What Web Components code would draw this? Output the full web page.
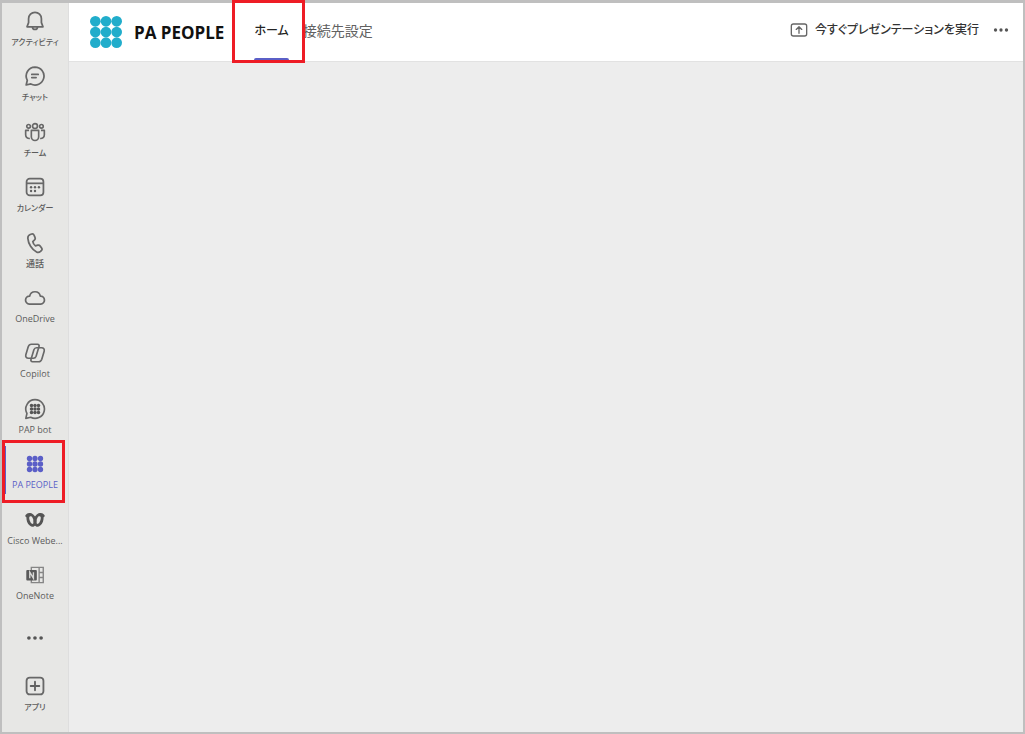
<!DOCTYPE html>
<html lang="ja">
<head>
<meta charset="utf-8">
<meta name="viewport" content="width=device-width, initial-scale=1">
<title>PA PEOPLE</title>
<style>
  body { margin: 0; font-family: "Open Sans", "Noto Sans CJK JP", sans-serif; color: #242424; }
</style>
</head>
<body>
<app-shell></app-shell>
<script>
const ICONS = {
  bell: '<g fill="none" stroke="#686868" stroke-width="1.9" stroke-linejoin="round"><path d="M12 2.500a7 7 0 0 0-7 7v4.300L3.300 18.300h17.400L19 13.800V9.500A7 7 0 0 0 12 2.500z"/><path d="M9.300 18.500a2.700 2.700 0 0 0 5.400 0"/></g>',
  chat: '<g fill="none" stroke="#686868" stroke-width="1.9" stroke-linecap="round" stroke-linejoin="round"><path d="M12 2.200a9.800 9.800 0 1 1-4.500 18.500L2.400 21.800l1.200-5.100A9.800 9.800 0 0 1 12 2.200z"/><path d="M8.500 10.300h7M8.500 13.700h4.700"/></g>',
  team: '<g fill="none" stroke="#686868" stroke-width="1.8"><circle cx="12" cy="5.500" r="2.700"/><circle cx="5" cy="5.800" r="2"/><circle cx="19" cy="5.800" r="2"/><path d="M8 10.300h8v7a4 4 0 0 1-8 0z" stroke-linejoin="round"/><path d="M5.500 10.300H1.800v4.700c0 2.800 2 4.300 4.600 4.100M18.500 10.300h3.700v4.700c0 2.800-2 4.300-4.600 4.100" stroke-linejoin="round"/></g>',
  calendar: '<rect x="2.800" y="2.800" width="18.400" height="18.400" rx="3.500" fill="none" stroke="#686868" stroke-width="1.900"/><path d="M3 8h18" stroke="#686868" stroke-width="1.900"/><g fill="#616161"><circle cx="7.700" cy="12.200" r="1.300"/><circle cx="12" cy="12.200" r="1.300"/><circle cx="16.300" cy="12.200" r="1.300"/><circle cx="7.700" cy="16.400" r="1.300"/><circle cx="12" cy="16.400" r="1.300"/></g>',
  phone: '<path d="M6.800 2.700l1.600-.5c1.100-.3 2.200.3 2.600 1.300l1 2.400c.4.900.2 2-.5 2.700L9.600 10.400c.3 1.700 1.500 3.600 2.900 4.700l2.500-.7c1-.3 2 0 2.600.8l1.600 2.200c.6.900.5 2.200-.3 2.900l-.9.900c-1.200 1.100-2.900 1.400-4.300.6C8.500 19.100 4.700 12.900 4.200 6.900c-.1-1.900.8-3.500 2.600-4.200z" fill="none" stroke="#686868" stroke-width="1.900" stroke-linejoin="round"/>',
  cloud: '<path d="M5.800 18.600a4.300 4.300 0 1 1 .4-8.600A5.900 5.900 0 0 1 17.800 10a4.300 4.300 0 1 1 .4 8.600z" fill="none" stroke="#686868" stroke-width="1.900" stroke-linejoin="round"/>',
  copilot: '<g fill="none" stroke="#686868" stroke-width="1.800" stroke-linejoin="round"><path d="M8 2.500h6.800c1.300 0 2 1.100 1.600 2.400l-3.200 10.600c-.5 1.400-1.400 2.200-2.900 2.200H4.800c-2.200 0-3.400-1.600-2.800-3.700l2.600-8.700C5.200 3.500 6.200 2.500 8 2.500z"/><path d="M16 21.500H9.200c-1.300 0-2-1.100-1.600-2.400l3.200-10.600c.5-1.400 1.400-2.200 2.900-2.200h5.500c2.200 0 3.400 1.600 2.800 3.700l-2.600 8.700c-.6 1.800-1.600 2.800-3.400 2.800z"/></g>',
  bot: '<path d="M12 1.800a10.200 10.200 0 1 1-4.700 19.200L2 22.200l1.200-5.300A10.200 10.200 0 0 1 12 1.800z" fill="none" stroke="#686868" stroke-width="1.800" stroke-linejoin="round"/><g fill="#555"><circle cx="8.200" cy="8.200" r="1.900"/><circle cx="12" cy="8.200" r="1.900"/><circle cx="15.800" cy="8.200" r="1.900"/><circle cx="8.200" cy="12" r="1.900"/><circle cx="12" cy="12" r="1.900"/><circle cx="15.800" cy="12" r="1.900"/><circle cx="8.200" cy="15.800" r="1.900"/><circle cx="12" cy="15.800" r="1.900"/><circle cx="15.800" cy="15.800" r="1.900"/></g>',
  people: '<g fill="#5b5fc7"><circle cx="6" cy="6" r="2.900"/><circle cx="12" cy="6" r="2.900"/><circle cx="18" cy="6" r="2.900"/><circle cx="6" cy="12" r="2.900"/><circle cx="12" cy="12" r="2.900"/><circle cx="18" cy="12" r="2.900"/><circle cx="6" cy="18" r="2.900"/><circle cx="12" cy="18" r="2.900"/><circle cx="18" cy="18" r="2.900"/></g>',
  webex: '<g fill="none" stroke="#555" stroke-width="3.200" stroke-linecap="round"><ellipse cx="8.200" cy="12" rx="3.600" ry="6" transform="rotate(-20 8.200 12)"/><ellipse cx="15.800" cy="12" rx="3.600" ry="6" transform="rotate(20 15.800 12)"/><path d="M3 7.500c1-1.400 2.500-1.800 4-1.300M21 7.500c-1-1.400-2.500-1.800-4-1.300"/></g>',
  onenote: '<path d="M8 7V3.700h13v16.600H8V17M16.500 4v16M16.500 9.300H21M16.500 14.700H21" fill="none" stroke="#858585" stroke-width="1.500"/><rect x="2.500" y="6.500" width="11.500" height="11.500" rx="1" fill="#5a5a5a"/><path d="M6.300 15.500V9l4 6.500V9" fill="none" stroke="#d8d8d6" stroke-width="1.500"/>',
  more: '<g fill="#555"><circle cx="4.700" cy="12" r="2.200"/><circle cx="12" cy="12" r="2.200"/><circle cx="19.300" cy="12" r="2.200"/></g>',
  plus: '<rect x="2.800" y="2.800" width="18.400" height="18.400" rx="3.500" fill="none" stroke="#686868" stroke-width="2"/><path d="M12 7.300v9.400M7.300 12h9.400" stroke="#616161" stroke-width="2" stroke-linecap="round"/>',
  present: '<rect x="2.800" y="4.800" width="18.400" height="14.400" rx="2.500" fill="none" stroke="#666" stroke-width="1.600"/><path d="M12 16V8.500M8.700 11.300L12 8l3.300 3.300" fill="none" stroke="#666" stroke-width="1.600" stroke-linecap="round" stroke-linejoin="round"/>',
  logo: '<g fill="#21adcb"><circle cx="4" cy="4" r="4"/><circle cx="12" cy="4" r="4"/><circle cx="20" cy="4" r="4"/><circle cx="4" cy="12" r="4"/><circle cx="12" cy="12" r="4"/><circle cx="20" cy="12" r="4"/><circle cx="4" cy="20" r="4"/><circle cx="12" cy="20" r="4"/><circle cx="20" cy="20" r="4"/></g>'
};

class Base extends HTMLElement {
  connectedCallback() {
    if (this.shadowRoot) return;
    this.attachShadow({ mode: 'open' }).innerHTML = this.view();
  }
}

customElements.define('app-icon', class extends Base {
  view() {
    return `<style>:host{display:block;flex:none;width:var(--icon-size,22px);height:var(--icon-size,22px)}svg{display:block;width:100%;height:100%}</style>
    <svg viewBox="0 0 24 24" aria-hidden="true">${ICONS[this.getAttribute('name')]}</svg>`;
  }
});

customElements.define('call-out', class extends Base {
  view() {
    return `<style>:host{position:absolute;box-sizing:border-box;border:3px solid #ee1c25;pointer-events:none;z-index:2}</style>`;
  }
});

customElements.define('rail-item', class extends Base {
  view() {
    return `<style>
      :host{display:block;position:relative;height:40px;color:#5c5c5c}
      :host([selected]){color:#5b5fc7}
      button{all:unset;box-sizing:border-box;display:flex;flex-direction:column;align-items:center;width:100%;height:100%;padding-top:1px;gap:3px;cursor:pointer}
      :host([compact]) button{justify-content:center;padding:0;gap:0}
      :host([compact]) app-icon{--icon-size:20px}
      span{font-size:9px;line-height:14px;font-weight:500;white-space:nowrap}
      :host([kana]) span{font-size:8px;font-feature-settings:"palt"}
      :host([selected])::before{content:"";position:absolute;left:2px;top:-6px;width:2px;height:48px;background:#5b5fc7}
      call-out{left:0;right:3px;top:-12px;height:63px}
    </style>
    <button type="button" aria-label="${this.getAttribute('label') || this.textContent}">
      <app-icon name="${this.getAttribute('icon')}"></app-icon>
      ${this.hasAttribute('compact') ? '' : '<span><slot></slot></span>'}
    </button>
    ${this.hasAttribute('selected') ? '<call-out></call-out>' : ''}`;
  }
});

customElements.define('app-rail', class extends Base {
  view() {
    return `<style>
      :host{display:block;background:#e7e7e5}
      nav{box-sizing:border-box;height:100%;padding:6px 0 18px;display:flex;flex-direction:column;justify-content:space-between}
    </style><nav aria-label="アプリ バー"><slot></slot></nav>`;
  }
});

customElements.define('app-tab', class extends Base {
  view() {
    return `<style>
      :host{display:flex;position:relative;font-size:14px}
      a{display:flex;align-items:center;padding-bottom:4px;color:#616161;text-decoration:none;white-space:nowrap;font-feature-settings:"palt"}
      :host([selected]) a{color:#242424;font-weight:500;font-size:12px}
      :host([selected]) a::after{content:"";position:absolute;left:0;right:0;bottom:0;height:3px;background:#5b5fc7;border-radius:2px 2px 0 0}
      call-out{left:-22px;right:-16px;top:-3px;bottom:-2px}
    </style><a href="#"><slot></slot></a>${this.hasAttribute('selected') ? '<call-out></call-out>' : ''}`;
  }
});

customElements.define('app-header', class extends Base {
  view() {
    return `<style>
      :host{display:flex;box-sizing:border-box;height:59px;padding:0 13px 0 21px;background:#fff;border-bottom:1px solid #e2e2e2}
      .logo{--icon-size:32px;align-self:center}
      h1{margin:0 30px 0 12px;padding-top:2px;align-self:center;font-size:17px;line-height:24px;font-weight:700;color:#111;white-space:nowrap}
      .tabs{display:flex;gap:14px}
      .actions{display:flex;align-items:center;margin-left:auto;padding-bottom:4px;gap:13px}
      button{all:unset;display:flex;align-items:center;gap:6px;font-size:12px;line-height:20px;color:#333;white-space:nowrap;font-weight:500;font-feature-settings:"palt";cursor:pointer}
      .present{--icon-size:20px}
      .more{--icon-size:18px}
    </style>
    <app-icon class="logo" name="logo"></app-icon><h1>PA PEOPLE</h1>
    <nav class="tabs"><slot></slot></nav>
    <div class="actions">
      <button type="button" class="present"><app-icon name="present"></app-icon>今すぐプレゼンテーションを実行</button>
      <button type="button" class="more" aria-label="その他"><app-icon name="more"></app-icon></button>
    </div>`;
  }
});

customElements.define('app-shell', class extends Base {
  view() {
    return `<style>
      :host{box-sizing:border-box;min-height:100vh;display:grid;grid-template-columns:66px 1fr;border:2px solid #bfbfbf;border-top-width:3px}
      .page{display:flex;flex-direction:column;min-width:0;border-left:1px solid #dedede}
      main{flex:1;background:#ededed}
    </style>
    <app-rail>
      <rail-item icon="bell" kana>アクティビティ</rail-item>
      <rail-item icon="chat" kana>チャット</rail-item>
      <rail-item icon="team" kana>チーム</rail-item>
      <rail-item icon="calendar" kana>カレンダー</rail-item>
      <rail-item icon="phone">通話</rail-item>
      <rail-item icon="cloud">OneDrive</rail-item>
      <rail-item icon="copilot">Copilot</rail-item>
      <rail-item icon="bot">PAP bot</rail-item>
      <rail-item icon="people" selected>PA PEOPLE</rail-item>
      <rail-item icon="webex">Cisco Webe...</rail-item>
      <rail-item icon="onenote">OneNote</rail-item>
      <rail-item icon="more" compact label="その他のアプリ"></rail-item>
      <rail-item icon="plus" kana>アプリ</rail-item>
    </app-rail>
    <div class="page">
      <app-header><app-tab selected>ホーム</app-tab><app-tab>接続先設定</app-tab></app-header>
      <main></main>
    </div>`;
  }
});
</script>
</body>
</html>
